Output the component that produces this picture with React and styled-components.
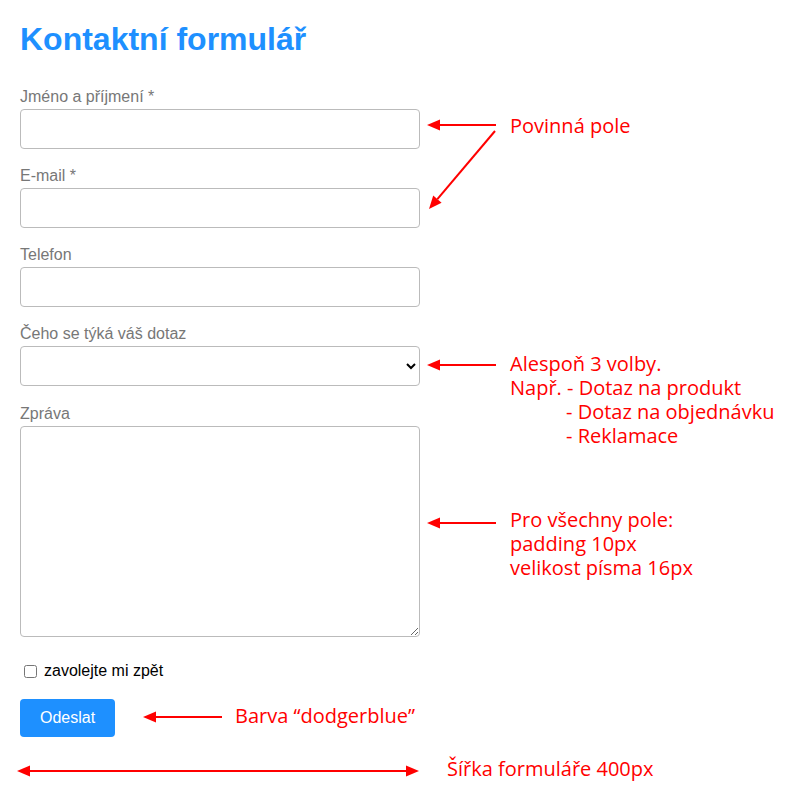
import React from "react";
import styled, { createGlobalStyle } from "styled-components";

const GlobalStyle = createGlobalStyle`
  html, body {
    margin: 0;
    padding: 0;
    background: #fff;
  }
  body {
    font-family: "Liberation Sans", Arial, sans-serif;
  }
  * { box-sizing: border-box; }
`;

const Page = styled.div`
  position: relative;
  width: 805px;
  min-height: 804px;
  padding: 21px 20px 20px 20px;
`;

const Title = styled.h1`
  margin: 0 0 30px 0;
  font-family: "Liberation Sans", Arial, sans-serif;
  font-size: 32px;
  line-height: 37px;
  font-weight: bold;
  color: dodgerblue;
`;

const Form = styled.form`
  width: 400px;
  display: flex;
  flex-direction: column;
`;

const Field = styled.div`
  display: flex;
  flex-direction: column;
  margin-top: ${(p) => (p.$last ? "1px" : "0")};
  margin-bottom: ${(p) => (p.$last ? "25px" : "18px")};
`;

const Label = styled.label`
  display: block;
  font-size: 16px;
  line-height: 18px;
  color: #777;
  margin-bottom: 3px;
`;

const fieldBase = `
  display: block;
  width: 100%;
  padding: 10px;
  font-family: "Liberation Sans", Arial, sans-serif;
  font-size: 16px;
  border: 1px solid #bbb;
  border-radius: 4px;
  background: #fff;
  color: #000;
  margin: 0;
`;

const Input = styled.input`
  ${fieldBase}
  line-height: normal;
`;

const Select = styled.select`
  ${fieldBase}
  height: 40px;
  padding: 0 6px 0 10px;
`;

const TextArea = styled.textarea`
  ${fieldBase}
  height: 211px;
`;

const CheckRow = styled.label`
  display: flex;
  align-items: center;
  font-size: 16px;
  line-height: 18px;
  color: #000;
  margin-bottom: 19px;
`;

const Checkbox = styled.input`
  width: 13px;
  height: 13px;
  margin: 0 7px 0 4px;
`;

const SubmitButton = styled.button`
  align-self: flex-start;
  padding: 10px 20px;
  font-family: "Liberation Sans", Arial, sans-serif;
  font-size: 16px;
  line-height: 18px;
  color: #fff;
  background: dodgerblue;
  border: none;
  border-radius: 4px;
  cursor: pointer;
`;

const Overlay = styled.svg`
  position: absolute;
  left: 0;
  top: 0;
  pointer-events: none;
`;

const Note = styled.div`
  position: absolute;
  left: ${(p) => p.$x}px;
  top: ${(p) => p.$y}px;
  font-family: "Open Sans", "Noto Sans", sans-serif;
  font-size: 20px;
  line-height: 24px;
  color: red;
  white-space: nowrap;
`;

const Indent = styled.div`
  padding-left: 56px;
`;

function head(fromX, fromY, tipX, tipY, len = 13, half = 5.5) {
  const dx = tipX - fromX;
  const dy = tipY - fromY;
  const l = Math.hypot(dx, dy);
  const ux = dx / l;
  const uy = dy / l;
  const bx = tipX - ux * len;
  const by = tipY - uy * len;
  const px = -uy * half;
  const py = ux * half;
  return {
    points: `${tipX},${tipY} ${bx + px},${by + py} ${bx - px},${by - py}`,
    bx,
    by,
  };
}

function Arrow({ x1, y1, x2, y2, both }) {
  const h = head(x1, y1, x2, y2);
  const t = both ? head(x2, y2, x1, y1) : null;
  return (
    <g>
      <line
        x1={t ? t.bx : x1}
        y1={t ? t.by : y1}
        x2={h.bx}
        y2={h.by}
        stroke="red"
        strokeWidth="2"
      />
      <polygon points={h.points} fill="red" />
      {t && <polygon points={t.points} fill="red" />}
    </g>
  );
}

export default function App() {
  return (
    <>
      <GlobalStyle />
      <Page>
        <Title>Kontaktní formulář</Title>
        <Form onSubmit={(e) => e.preventDefault()}>
          <Field>
            <Label htmlFor="name">Jméno a příjmení *</Label>
            <Input id="name" type="text" required />
          </Field>
          <Field>
            <Label htmlFor="email">E-mail *</Label>
            <Input id="email" type="email" required />
          </Field>
          <Field>
            <Label htmlFor="phone">Telefon</Label>
            <Input id="phone" type="tel" />
          </Field>
          <Field>
            <Label htmlFor="topic">Čeho se týká váš dotaz</Label>
            <Select id="topic" defaultValue="">
              <option value=""></option>
              <option value="produkt">Dotaz na produkt</option>
              <option value="objednavka">Dotaz na objednávku</option>
              <option value="reklamace">Reklamace</option>
            </Select>
          </Field>
          <Field $last>
            <Label htmlFor="msg">Zpráva</Label>
            <TextArea id="msg" />
          </Field>
          <CheckRow>
            <Checkbox type="checkbox" />
            zavolejte mi zpět
          </CheckRow>
          <SubmitButton type="submit">Odeslat</SubmitButton>
        </Form>

        <Overlay width="805" height="804" viewBox="0 0 805 804">
          <Arrow x1={496} y1={125} x2={427} y2={125} />
          <Arrow x1={495} y1={131} x2={429} y2={209} />
          <Arrow x1={496} y1={365} x2={427} y2={365} />
          <Arrow x1={496} y1={523} x2={427} y2={523} />
          <Arrow x1={222} y1={717} x2={143} y2={717} />
          <Arrow x1={419} y1={771} x2={17} y2={771} both />
        </Overlay>

        <Note $x={510} $y={114}>Povinná pole</Note>
        <Note $x={510} $y={352}>
          <div>Alespoň 3 volby.</div>
          <div>Např. - Dotaz na produkt</div>
          <Indent>- Dotaz na objednávku</Indent>
          <Indent>- Reklamace</Indent>
        </Note>
        <Note $x={510} $y={508}>
          <div>Pro všechny pole:</div>
          <div>padding 10px</div>
          <div>velikost písma 16px</div>
        </Note>
        <Note $x={235} $y={704}>Barva “dodgerblue”</Note>
        <Note $x={447} $y={757}>Šířka formuláře 400px</Note>
      </Page>
    </>
  );
}
